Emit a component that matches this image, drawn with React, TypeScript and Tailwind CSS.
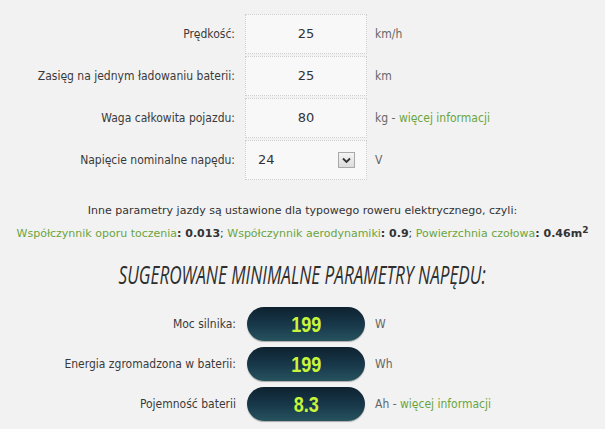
import React from "react";

const labelFont = { fontFamily: '"DejaVu Sans Condensed", "DejaVu Sans", sans-serif' };

function InputRow({ label, value, unit, link, select }: { label: string; value: string; unit: string; link?: boolean; select?: boolean }) {
  return (
    <div className="flex items-center h-[40px]">
      <div className="w-[236px] text-right text-[12px] text-[#3a3a3a] pr-[1px]">{label}</div>
      <div className="ml-[9px] w-[122px] h-[40px] border border-dotted border-[#cfcfcf] bg-[#f8f8f8] flex items-center">
        {select ? (
          <div className="flex items-center w-full pl-[12px] pr-[11px]">
            <span className="text-[13px] text-[#333] flex-1" style={{ fontFamily: '"DejaVu Sans", sans-serif' }}>{value}</span>
            <span className="w-[17px] h-[16px] border border-[#a9a9a9] bg-gradient-to-b from-[#f4f4f4] to-[#dcdcdc] flex items-center justify-center">
              <svg width="9" height="7" viewBox="0 0 9 7"><path d="M1 1.5 L4.5 5 L8 1.5" fill="none" stroke="#333" strokeWidth="1.8" /></svg>
            </span>
          </div>
        ) : (
          <span className="w-full text-center text-[13px] text-[#333]" style={{ fontFamily: '"DejaVu Sans", sans-serif' }}>{value}</span>
        )}
      </div>
      <div className="ml-[8px] text-[12px] text-[#666]">
        {unit}
        {link && (
          <>
            {" - "}
            <span className="text-[#6aa53e]">więcej informacji</span>
          </>
        )}
      </div>
    </div>
  );
}

function ResultRow({ label, value, unit, link }: { label: string; value: string; unit: string; link?: boolean }) {
  return (
    <div className="flex items-center h-[34px]">
      <div className="w-[236px] text-right text-[12px] text-[#3a3a3a]">{label}</div>
      <div className="ml-[11px] w-[118px] h-[34px] rounded-full bg-gradient-to-b from-[#0e2230] via-[#173748] to-[#27535f] shadow-[0_1px_1px_rgba(0,0,0,0.3)] flex items-center justify-center">
        <span
          className="text-[22px] font-bold text-[#c8f53a] inline-block scale-x-[0.82]"
          style={{ fontFamily: '"Liberation Sans Narrow", "Liberation Sans", Arial, sans-serif' }}
        >
          {value}
        </span>
      </div>
      <div className="ml-[10px] text-[12px] text-[#666]">
        {unit}
        {link && (
          <>
            {" - "}
            <span className="text-[#6aa53e]">więcej informacji</span>
          </>
        )}
      </div>
    </div>
  );
}

export default function App() {
  return (
    <div className="w-[605px] h-[429px] bg-[#f2f2f2] overflow-hidden" style={labelFont}>
      <div className="pt-[14px] flex flex-col gap-[2px]">
        <InputRow label="Prędkość:" value="25" unit="km/h" />
        <InputRow label="Zasięg na jednym ładowaniu baterii:" value="25" unit="km" />
        <InputRow label="Waga całkowita pojazdu:" value="80" unit="kg" link />
        <InputRow label="Napięcie nominalne napędu:" value="24" unit="V" select />
      </div>
      <div className="mt-[21px] text-center text-[#333]" style={{ fontFamily: '"DejaVu Sans", sans-serif' }}>
        <div className="leading-[20px] text-[11px]">Inne parametry jazdy są ustawione dla typowego roweru elektrycznego, czyli:</div>
        <div className="leading-[22px] mt-[2px] text-[11px]">
          <span className="text-[#6aa53e]">Współczynnik oporu toczenia</span>
          <b className="text-[#333]">: 0.013</b>; <span className="text-[#6aa53e]">Współczynnik aerodynamiki</span>
          <b>: 0.9</b>; <span className="text-[#6aa53e]">Powierzchnia czołowa</span>
          <b>: 0.46m<sup className="text-[9px]">2</sup></b>
        </div>
      </div>
      <div className="mt-[14px] flex justify-center">
        <span
          className="inline-block italic font-normal text-[26px] leading-[30px] text-[#2e2e2e] scale-x-[0.66] whitespace-nowrap"
          style={{ fontFamily: '"Open Sans", sans-serif' }}
        >
          SUGEROWANE MINIMALNE PARAMETRY NAPĘDU:
        </span>
      </div>
      <div className="mt-[18px] flex flex-col gap-[6px]">
        <ResultRow label="Moc silnika:" value="199" unit="W" />
        <ResultRow label="Energia zgromadzona w baterii:" value="199" unit="Wh" />
        <ResultRow label="Pojemność baterii" value="8.3" unit="Ah" link />
      </div>
    </div>
  );
}
